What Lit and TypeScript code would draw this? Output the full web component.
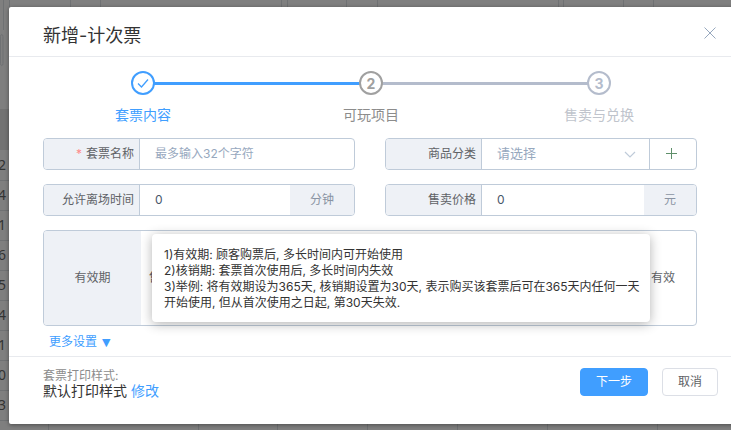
import { LitElement, html, css, svg } from "lit";
import { customElement } from "lit/decorators.js";

const TOP = [3, 9, 70, 100, 281, 287, 346, 377, 558, 563, 623, 653];
const BOTTOM = [48, 198, 277, 367, 457, 547, 657];
const ROWS = ["2", "4", "1", "6", "5", "4", "1", "0", "3"];

@customElement("app-root")
export class AppRoot extends LitElement {
  static styles = css`
    :host {
      display: block;
      position: relative;
      width: 731px;
      height: 430px;
      overflow: hidden;
      background: #7f7f7f;
      font-family: "Inter", "Noto Sans CJK SC", sans-serif;
      font-size: 14px;
      color: #48576a;
    }
    .under { position: absolute; inset: 0; width: 731px; height: 430px; display: block; }
    .under text { font-size: 14px; fill: #333; font-family: "Noto Sans", sans-serif; }
    .modal {
      position: absolute;
      left: 9px;
      top: 7px;
      width: 740px;
      height: 417px;
      background: #fff;
      border-radius: 2px;
      box-shadow: 0 1px 4px rgba(0, 0, 0, 0.4);
      display: flex;
      flex-direction: column;
    }
    .head {
      height: 50px;
      flex: none;
      box-sizing: border-box;
      border-bottom: 1px solid #e8eaee;
      padding: 0 15px 0 34px;
      width: 722px;
      display: flex;
      align-items: center;
      justify-content: space-between;
      font-size: 18px;
      color: #333;
    }
    .head span { position: relative; top: 2px; }
    .close { width: 12px; height: 12px; display: block; position: relative; top: 1px; }
    .body { width: 722px; height: 299px; flex: none; padding: 0 0 0 34px; box-sizing: border-box; }
    .steps {
      display: grid;
      grid-template-columns: repeat(3, 228px);
      height: 82px;
      transform: translateX(-14px);
      width: 684px;
      margin: 0;
    }
    .step {
      position: relative;
      display: flex;
      flex-direction: column;
      align-items: center;
      padding-top: 14px;
      font-size: 14px;
    }
    .circle {
      position: relative;
      z-index: 1;
      box-sizing: border-box;
      width: 24px;
      height: 24px;
      border: 2px solid currentColor;
      border-radius: 50%;
      background: #fff;
      display: flex;
      align-items: center;
      justify-content: center;
      font-size: 14px;
      font-weight: 700;
    }
    .bar {
      position: absolute;
      left: 50%;
      width: 228px;
      top: 25px;
      height: 3px;
      background: currentColor;
    }
    .label { margin-top: 9px; line-height: 22px; }
    .s1 { color: #409eff; }
    .s2 { color: #a0a0a0; }
    .s2 .bar { background: #b4bccc; }
    .s2 .label { color: #8c8c8c; }
    .s3 { color: #b4bccc; }
    .s3 .label { color: #c0c4cc; }

    .grid {
      display: grid;
      grid-template-columns: 312px 312px;
      column-gap: 30px;
      row-gap: 14px;
      margin-top: -1px;
    }
    .field {
      display: flex;
      box-sizing: border-box;
      height: 32px;
      border: 1px solid #bfcbd9;
      border-radius: 4px;
      overflow: hidden;
      line-height: 30px;
      font-size: 12px;
    }
    .lab {
      flex: none;
      width: 96px;
      box-sizing: border-box;
      padding-right: 5px;
      background: #eef1f6;
      border-right: 1px solid #bfcbd9;
      text-align: right;
      color: #606266;
      white-space: nowrap;
    }
    .star { color: #ff8a8a; margin-right: 4px; }
    .val { flex: 1; padding-left: 15px; color: #48576a; min-width: 0; }
    .ph { color: #97a8be; }
    .addon {
      flex: none;
      background: #eef1f6;
      color: #8a94a3;
      text-align: center;
      font-size: 12px;
    }
    .a1 { width: 64px; }
    .a2 { width: 52px; }
    .select { display: flex; justify-content: space-between; align-items: center; padding-right: 12px; font-size: 13px; }
    .select span { margin-bottom: 2px; }
    .chev { width: 14px; height: 8px; display: block; margin-top: 2px; }
    .plus { width: 47px; flex: none; border-left: 1px solid #bfcbd9; box-sizing: border-box; padding: 0 3px 1px 0; display: flex; align-items: center; justify-content: center; }
    .plus svg { width: 11px; height: 11px; display: block; }
    .wide { grid-column: 1 / 3; height: 96px; line-height: 94px; }
    .wide .lab { width: 97px; padding: 0; text-align: center; border-right: 0; }
    .behind { display: flex; justify-content: space-between; padding: 0 21px 0 8px; color: #606266; }
    .more { color: #409eff; font-size: 12px; line-height: 20px; margin: 6px 0 0 6px; }
    .tri { font-family: "DejaVu Sans", sans-serif; font-size: 11px; margin-left: 5px; }
    .foot {
      position: relative;
      width: 722px;
      box-sizing: border-box;
      border-top: 1px solid #e8eaee;
      padding: 11px 13px 0 34px;
      display: flex;
      justify-content: space-between;
    }
    .print { font-size: 12px; line-height: 15px; color: #8c8c8c; }
    .print div { font-size: 14px; line-height: 15px; color: #333; }
    .print a { color: #409eff; }
    .btns { display: flex; gap: 14px; }
    .btn {
      box-sizing: border-box;
      height: 28px;
      line-height: 26px;
      border-radius: 4px;
      font-size: 12px;
      text-align: center;
      border: 1px solid #dcdfe6;
      color: #606266;
      width: 56px;
      background: #fff;
    }
    .btn.primary { width: 68px; background: #409eff; border-color: #409eff; color: #fff; }
    .tip {
      position: absolute;
      left: 143px;
      top: 227px;
      width: 498px;
      height: 88px;
      box-sizing: border-box;
      padding: 13px 12px;
      background: #fff;
      border-radius: 4px;
      box-shadow: 0 2px 12px rgba(0, 0, 0, 0.3);
      font-size: 12px;
      line-height: 16px;
      color: #333;
      white-space: nowrap;
    }
  `;

  private under() {
    return html`<svg class="under" viewBox="0 0 731 430">
      ${TOP.map((x) => svg`<line x1=${x + 0.5} x2=${x + 0.5} y1="0" y2="30" stroke="#6f7173"></line>`)}
      <rect x="0" y="109" width="9" height="41" fill="#737373"></rect>
      <rect x="0.5" y="34.5" width="2.5" height="31" rx="2" fill="none" stroke="#6f7173"></rect>
      ${ROWS.map((_, i) => svg`<line x1="0" x2="9" y1=${180.5 + i * 30} y2=${180.5 + i * 30} stroke="#6f7173"></line>`)}
      <line x1="0" x2="731" y1="420.5" y2="420.5" stroke="#6f7173"></line>
      ${BOTTOM.map((x) => svg`<line x1=${x + 0.5} x2=${x + 0.5} y1="420" y2="430" stroke="#6f7173"></line>`)}
      ${ROWS.map((d, i) => svg`<text x="-2" y=${170 + i * 30}>${d}</text>`)}
    </svg>`;
  }

  render() {
    return html`
      ${this.under()}
      <div class="modal">
        <div class="head">
          <span>新增-计次票</span>
          <svg class="close" viewBox="0 0 12 12"><path d="M.5.5l11 11M11.500.5l-11 11" stroke="#97a8be" fill="none"></path></svg>
        </div>
        <div class="body">
          <div class="steps">
            <div class="step s1">
              <div class="bar"></div>
              <div class="circle"><svg width="14" height="12" viewBox="0 0 14 12"><path d="M2 6.500l3.500 3.500L12 2.500" fill="none" stroke="#409eff" stroke-width="1.300"></path></svg></div>
              <div class="label">套票内容</div>
            </div>
            <div class="step s2">
              <div class="bar"></div>
              <div class="circle">2</div>
              <div class="label">可玩项目</div>
            </div>
            <div class="step s3">
              <div class="circle">3</div>
              <div class="label">售卖与兑换</div>
            </div>
          </div>
          <div class="grid">
            <div class="field">
              <div class="lab"><span class="star">*</span>套票名称</div>
              <div class="val ph">最多输入32个字符</div>
            </div>
            <div class="field">
              <div class="lab">商品分类</div>
              <div class="val ph select"><span>请选择</span>
                <svg class="chev" viewBox="0 0 14 8"><path d="M2 1l5 5 5-5" fill="none" stroke="#bfcbd9" stroke-width="1.200"></path></svg>
              </div>
              <div class="plus"><svg viewBox="0 0 11 11"><path d="M5.500 0v11M0 5.500h11" stroke="#5f8f6a" fill="none"></path></svg></div>
            </div>
            <div class="field">
              <div class="lab">允许离场时间</div>
              <div class="val">0</div>
              <div class="addon a1">分钟</div>
            </div>
            <div class="field">
              <div class="lab">售卖价格</div>
              <div class="val">0</div>
              <div class="addon a2">元</div>
            </div>
            <div class="field wide">
              <div class="lab">有效期</div>
              <div class="val behind"><span>售</span><span>有效</span></div>
            </div>
          </div>
          <div class="more">更多设置<span class="tri">▼</span></div>
        </div>
        <div class="foot">
          <div class="print">
            套票打印样式:
            <div>默认打印样式 <a>修改</a></div>
          </div>
          <div class="btns">
            <div class="btn primary">下一步</div>
            <div class="btn">取消</div>
          </div>
        </div>
        <div class="tip">
          1)有效期: 顾客购票后, 多长时间内可开始使用<br />
          2)核销期: 套票首次使用后, 多长时间内失效<br />
          3)举例: 将有效期设为365天, 核销期设置为30天, 表示购买该套票后可在365天内任何一天<br />
          开始使用, 但从首次使用之日起, 第30天失效.
        </div>
      </div>
    `;
  }
}
